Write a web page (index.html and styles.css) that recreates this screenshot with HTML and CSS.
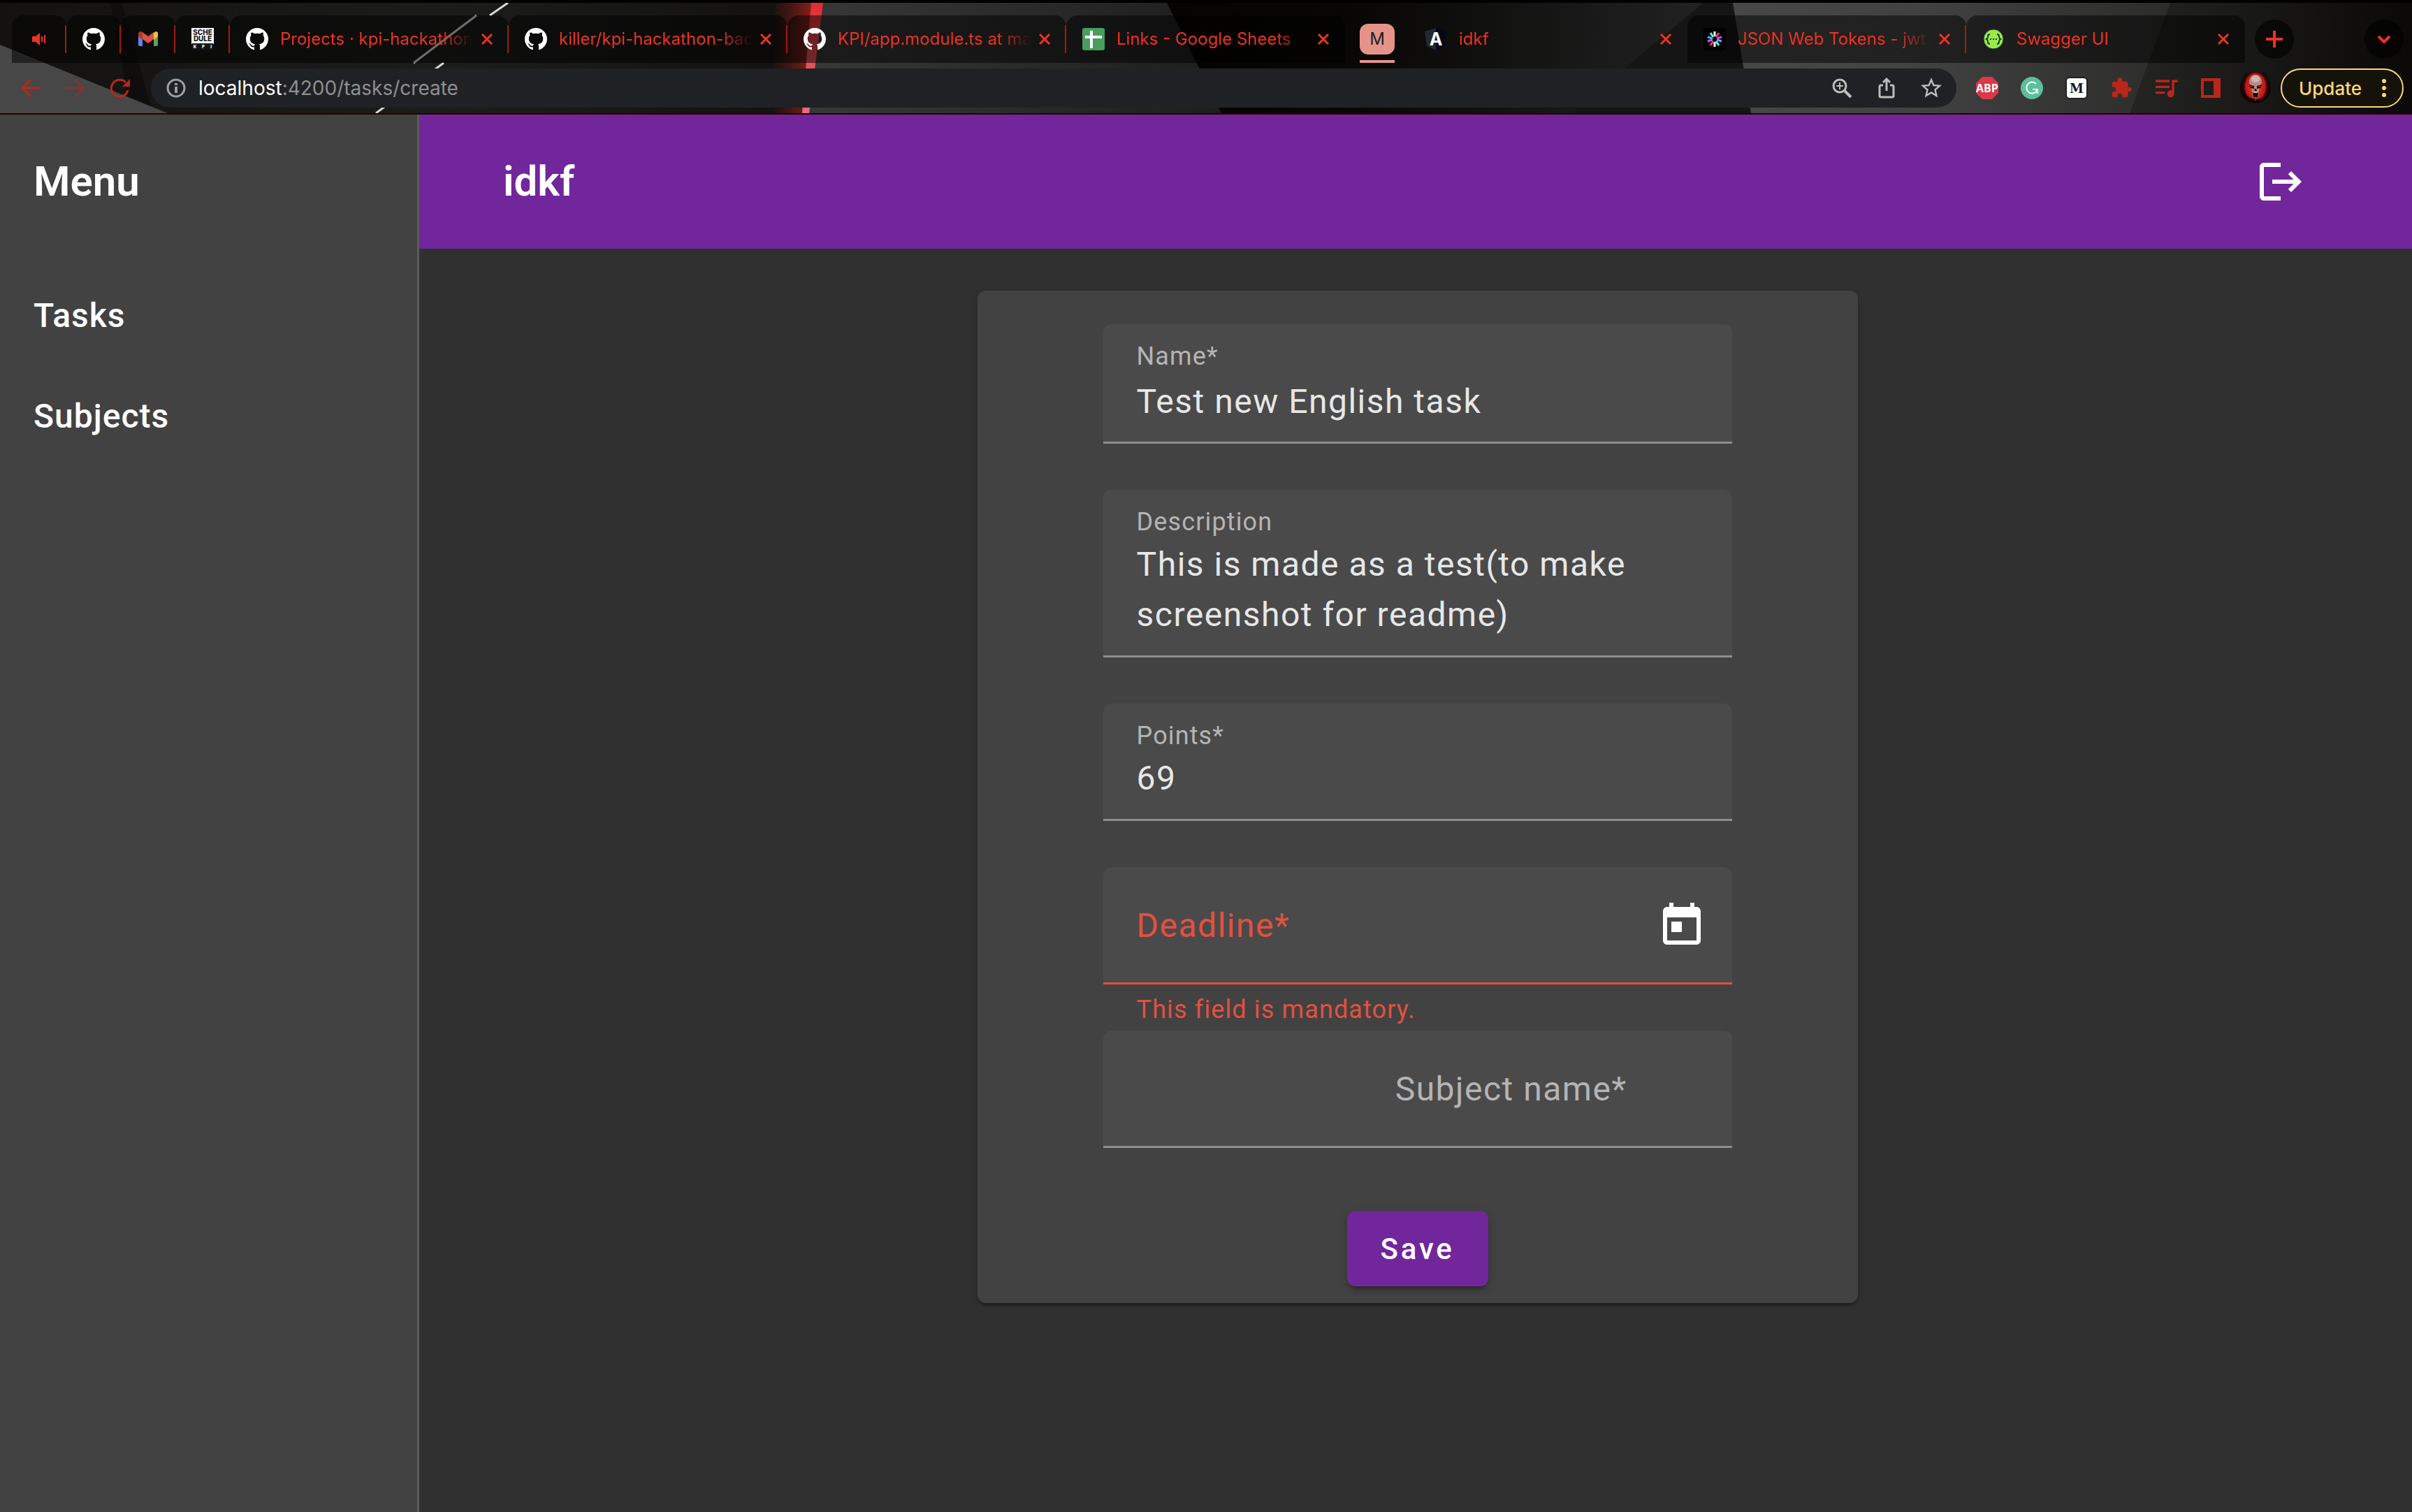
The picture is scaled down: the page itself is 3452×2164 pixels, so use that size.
FILE: index.html
```
<!DOCTYPE html>
<html lang="en">
<head>
<meta charset="utf-8">
<title>idkf</title>
<link rel="stylesheet" href="styles.css">
</head>
<body>
<svg class="defs" width="0" height="0" aria-hidden="true">
  <symbol id="close" viewBox="0 0 16 16"><path d="M1 1l14 14M15 1L1 15" fill="none" stroke="currentColor" stroke-width="3"/></symbol>
  <symbol id="github" viewBox="0 0 16 16"><path fill="#fff" d="M8 0C3.58 0 0 3.58 0 8c0 3.54 2.29 6.53 5.47 7.59.4.07.55-.17.55-.38 0-.19-.01-.82-.01-1.49-2.01.37-2.53-.49-2.69-.94-.09-.23-.48-.94-.82-1.13-.28-.15-.68-.52-.01-.53.63-.01 1.08.58 1.23.82.72 1.21 1.87.87 2.33.66.07-.52.28-.87.51-1.07-1.78-.2-3.64-.89-3.64-3.95 0-.87.31-1.59.82-2.15-.08-.2-.36-1.02.08-2.12 0 0 .67-.21 2.2.82.64-.18 1.32-.27 2-.27.68 0 1.36.09 2 .27 1.53-1.04 2.2-.82 2.2-.82.44 1.1.16 1.92.08 2.12.51.56.82 1.27.82 2.15 0 3.07-1.87 3.75-3.65 3.95.29.25.54.73.54 1.48 0 1.07-.01 1.93-.01 2.2 0 .21.15.46.55.38A8.013 8.013 0 0016 8c0-4.42-3.58-8-8-8z"/></symbol>
</svg>

<header class="browser">
  <svg class="theme" viewBox="0 0 3452 158" preserveAspectRatio="xMinYMin slice" aria-hidden="true">
    <defs>
      <linearGradient id="glow"><stop offset="0" stop-color="#7a1c14" stop-opacity="0"/><stop offset="1" stop-color="#8a2018"/></linearGradient>
      <linearGradient id="panel"><stop offset="0" stop-color="#383838"/><stop offset="1" stop-color="#1d1d1d"/></linearGradient>
      <linearGradient id="dark"><stop offset="0" stop-color="#060402"/><stop offset="0.35" stop-color="#080706"/><stop offset="1" stop-color="#222"/></linearGradient>
      <linearGradient id="steel"><stop offset="0" stop-color="#474747"/><stop offset="0.4" stop-color="#424242"/><stop offset="1" stop-color="#2c2c2b"/></linearGradient>
      <linearGradient id="edge"><stop offset="0" stop-color="#242422"/><stop offset="1" stop-color="#0a0908"/></linearGradient>
      <linearGradient id="laser" x2="0" y2="1"><stop offset="0" stop-color="#e02c32"/><stop offset="1" stop-color="#e57080"/></linearGradient>
      <linearGradient id="left"><stop offset="0" stop-color="#131210"/><stop offset="0.55" stop-color="#1c1c1b"/><stop offset="1" stop-color="#12110f"/></linearGradient>
    </defs>
    <path fill="url(#left)" d="M0 0h1170v158H0z"/>
    <path fill="#0f0e0c" d="M158 0h16l45 158h-32z"/>
    <path fill="#474747" d="M0 60l240 98H0z"/>
    <path d="M727 0l-26 18M682 18l-90 68M635 86l-97 72" stroke="#d8d8d8" stroke-width="3"/>
    <path fill="url(#glow)" d="M1110 0h54l-14 158h-46z"/>
    <path fill="url(#panel)" d="M1170 0h504l82 158h-604z"/>
    <path fill="url(#laser)" d="M1161 0h17l-20 158h-10z"/>
    <path fill="url(#dark)" d="M1670 0h780l-186 158h-516z"/>
    <path fill="#151515" d="M2438 0h44l24 158h-258z"/>
    <path fill="url(#steel)" d="M2480 0h628l-58 158h-544z"/>
    <path fill="url(#edge)" d="M3106 0h346v158h-404z"/>
  </svg>

  <nav class="tabs" aria-label="Tabs">
    <a class="tab pinned" href="#" aria-label="Playing audio">
      <svg class="favicon" viewBox="0 0 32 32"><path fill="#f0321f" d="M6 12h5l6-5v18l-6-5H6zM19 12h2v8h-2zM23 10h2v12h-2z"/></svg>
    </a>
    <a class="tab pinned" href="#" aria-label="GitHub"><svg class="favicon"><use href="#github"/></svg></a>
    <a class="tab pinned" href="#" aria-label="Gmail">
      <svg class="favicon" viewBox="0 0 32 32"><path fill="#5a86ee" d="M2 9l6 5v12H4q-2 0-2-2z"/><path fill="#55a35b" d="M24 14l6-5v15q0 2-2 2h-4z"/><path fill="#f3bf42" d="M24 7q4-4 6 0v5l-6 5z"/><path fill="#b5352a" d="M2 12V8q1-5 6-2v11z"/><path fill="#dc5144" d="M8 6l8 6 8-6v10l-8 6-8-6z"/></svg>
    </a>
    <a class="tab pinned" href="#" aria-label="Schedule KPI">
      <svg class="favicon" viewBox="0 0 32 32"><path fill="#fff" d="M0 0h32v23H0z"/><path fill="#15161b" d="M1 22h30v9H1z"/><text class="logo-text" x="16" y="10" font-size="10">SCHE</text><text class="logo-text" x="16" y="19" font-size="10">DULE</text><text class="logo-text light" x="5" y="29" font-size="6">K</text><text class="logo-text light" x="17" y="29" font-size="6">P</text><text class="logo-text light" x="28" y="29" font-size="6">I</text></svg>
    </a>
    <div class="tab"><svg class="favicon"><use href="#github"/></svg><a class="title" href="#">Projects · kpi-hackathon</a><button class="close" aria-label="Close tab"><svg><use href="#close"/></svg></button></div>
    <div class="tab"><svg class="favicon"><use href="#github"/></svg><a class="title" href="#">killer/kpi-hackathon-bac</a><button class="close" aria-label="Close tab"><svg><use href="#close"/></svg></button></div>
    <div class="tab"><svg class="favicon"><use href="#github"/></svg><a class="title" href="#">KPI/app.module.ts at ma</a><button class="close" aria-label="Close tab"><svg><use href="#close"/></svg></button></div>
    <div class="tab last">
      <svg class="favicon" viewBox="0 0 32 32"><rect width="32" height="32" rx="3" fill="#489d5f"/><path fill="#fff" d="M11 4h4v7h13v4H15v14h-4V15H4v-4h7z"/></svg>
      <a class="title" href="#">Links - Google Sheets</a><button class="close" aria-label="Close tab"><svg><use href="#close"/></svg></button>
    </div>
    <button class="group"><span class="chip">M</span></button>
    <div class="tab active">
      <svg class="favicon" viewBox="0 0 32 32"><path fill="#23272e" d="M16 0L0 5l3 21 13 6z"/><path fill="#020a1a" d="M16 0l16 5-3 21-13 6z"/><text x="16" y="25" font-size="25" font-weight="700" fill="#fff" text-anchor="middle">A</text></svg>
      <a class="title" href="#" aria-current="page">idkf</a><button class="close" aria-label="Close tab"><svg><use href="#close"/></svg></button>
    </div>
    <div class="tab">
      <svg class="favicon" viewBox="0 0 32 32"><path d="M0 0h32v32H0z"/><g stroke-width="3"><path stroke="#fff" d="M16 5v7M16 20v7"/><path stroke="#f43a6a" d="M22 7l-4 6M10 25l4-6"/><path stroke="#d04bff" d="M26 13l-7 2M6 19l7-2"/><path stroke="#45b4f5" d="M26 19l-7-2M6 13l7 2"/><path stroke="#5df5dd" d="M10 7l4 6M22 25l-4-6"/></g></svg>
      <a class="title" href="#">JSON Web Tokens - jwt.</a><button class="close" aria-label="Close tab"><svg><use href="#close"/></svg></button>
    </div>
    <div class="tab last">
      <svg class="favicon" viewBox="0 0 32 32"><circle cx="16" cy="16" r="14" fill="#9bea4b" stroke="#1e3a3f"/><path fill="none" stroke="#1e3540" stroke-width="2" d="M11 9q-3 0-3 3t-2 4q2 1 2 4t3 3M21 9q3 0 3 3t2 4q-2 1-2 4t-3 3"/><path fill="#1e3540" d="M11 15h2v2h-2zM15 15h2v2h-2zM19 15h2v2h-2z"/></svg>
      <a class="title" href="#">Swagger UI</a><button class="close" aria-label="Close tab"><svg><use href="#close"/></svg></button>
    </div>
    <button class="round" aria-label="New tab"><svg width="28" height="28" viewBox="0 0 28 28"><path d="M14 2v24M2 14h24" stroke="currentColor" stroke-width="4"/></svg></button>
    <button class="round end" aria-label="Search tabs"><svg width="28" height="28" viewBox="0 0 28 28"><path d="M6 10l8 8 8-8" fill="none" stroke="currentColor" stroke-width="4"/></svg></button>
  </nav>

  <div class="toolbar">
    <button class="tool" aria-label="Back"><svg width="32" height="32" viewBox="0 0 32 32"><path d="M29 16H5M16 4L4 16l12 12" fill="none" stroke="currentColor" stroke-width="3"/></svg></button>
    <button class="tool faded" aria-label="Forward" disabled><svg width="32" height="32" viewBox="0 0 32 32"><path d="M3 16h24M16 4l12 12-12 12" fill="none" stroke="currentColor" stroke-width="3"/></svg></button>
    <button class="tool" aria-label="Reload"><svg width="32" height="32" viewBox="0 0 32 32"><path d="M27 19A12 12 0 1 1 24 8" fill="none" stroke="currentColor" stroke-width="3"/><path d="M30 3v11H19z" fill="currentColor"/></svg></button>
    <div class="omnibox">
      <svg class="info" viewBox="0 0 28 28"><circle cx="14" cy="14" r="12" fill="none" stroke="#9aa0a6" stroke-width="3"/><path fill="#9aa0a6" d="M12 7h4v3h-4zM12 12h4v9h-4z"/></svg>
      <div class="url" role="textbox" aria-label="Address"><span class="host">localhost</span>:4200/tasks/create</div>
      <button class="tool grey" aria-label="Zoom"><svg width="32" height="32" viewBox="0 0 32 32"><circle cx="13" cy="13" r="9" fill="none" stroke="currentColor" stroke-width="3"/><path d="M20 20l9 9" stroke="currentColor" stroke-width="4"/><path d="M13 8v10M8 13h10" stroke="currentColor" stroke-width="2"/></svg></button>
      <button class="tool grey" aria-label="Share"><svg width="32" height="32" viewBox="0 0 32 32"><path d="M11 12H8q-2 0-2 2v13q0 2 2 2h16q2 0 2-2V14q0-2-2-2h-3M16 20V4M11 8l5-5 5 5" fill="none" stroke="currentColor" stroke-width="3"/></svg></button>
      <button class="tool grey" aria-label="Bookmark"><svg width="36" height="36" viewBox="0 0 24 24"><path fill="currentColor" d="M22 9.24l-7.19-.62L12 2 9.19 8.63 2 9.24l5.46 4.73L5.82 21 12 17.27 18.18 21l-1.63-7.03L22 9.24zM12 15.4l-3.76 2.27 1-4.28-3.32-2.88 4.38-.38L12 6.1l1.71 4.04 4.38.38-3.32 2.88 1 4.28L12 15.4z"/></svg></button>
    </div>
    <div class="extensions">
      <button class="tool" aria-label="Adblock Plus"><svg width="32" height="32" viewBox="0 0 32 32"><path fill="#dc3849" d="M9 0h14l9 9v14l-9 9H9l-9-9V9z"/><text x="16" y="22" font-family="Open Sans, sans-serif" font-size="16" font-weight="700" fill="#fff" text-anchor="middle">ABP</text></svg></button>
      <button class="tool" aria-label="Grammarly"><svg width="32" height="32" viewBox="0 0 32 32"><circle cx="16" cy="16" r="16" fill="#5bc09b"/><path d="M22 10a8 8 0 1 0 1 10M17 18h7v6" fill="none" stroke="#fff" stroke-width="2"/></svg></button>
      <button class="tool" aria-label="Mail tracker"><svg width="32" height="32" viewBox="0 0 32 32"><rect x="1" y="1" width="30" height="30" rx="5" fill="#fff" stroke="#1e2129" stroke-width="2"/><text x="16" y="23" font-family="DejaVu Serif, serif" font-size="18" font-weight="700" fill="#15181f" text-anchor="middle">M</text></svg></button>
      <button class="tool" aria-label="Extensions"><svg width="32" height="32" viewBox="0 0 24 24"><path fill="currentColor" d="M20.500 11H19V7c0-1.100-.9-2-2-2h-4V3.500C13 2.120 11.880 1 10.500 1S8 2.120 8 3.500V5H4c-1.100 0-1.990.9-1.990 2v3.800H3.500c1.490 0 2.700 1.210 2.700 2.700s-1.210 2.700-2.700 2.700H2V20c0 1.100.9 2 2 2h3.800v-1.500c0-1.490 1.210-2.700 2.700-2.700 1.490 0 2.700 1.210 2.700 2.700V22H17c1.100 0 2-.9 2-2v-4h1.500c1.380 0 2.500-1.120 2.500-2.500S21.880 11 20.500 11z"/></svg></button>
      <button class="tool" aria-label="Media"><svg width="40" height="40" viewBox="0 0 24 24"><path fill="currentColor" d="M15 5H3v2h12V5zm0 5H3v2h12v-2zM3 17h8v-2H3v2zM17 5v9.180c-.31-.11-.65-.18-1-.18-1.660 0-3 1.340-3 3s1.340 3 3 3 3-1.340 3-3V7h3V5h-5z"/></svg></button>
      <button class="tool" aria-label="Side panel"><svg width="28" height="28" viewBox="0 0 28 28"><path fill="currentColor" fill-rule="evenodd" d="M0 0h28v28H0zM4 4v20h14V4z"/></svg></button>
      <button class="tool" aria-label="Profile"><svg width="44" height="44" viewBox="0 0 44 44">
        <defs><radialGradient id="fire"><stop offset="0.4" stop-color="#e0281c"/><stop offset="0.72" stop-color="#b31712"/><stop offset="0.8" stop-color="#3a0806"/><stop offset="1" stop-color="#120303"/></radialGradient></defs>
        <circle cx="22" cy="22" r="22" fill="#160404"/><ellipse cx="22" cy="20" rx="20" ry="26" fill="url(#fire)" clip-path="circle(22px at 22px 22px)"/>
        <path fill="#b98a84" d="M22 3c-7 0-9 6-9 11l2 5 2 6 1 10 4 5 4-5 1-10 2-6 2-5c0-5-2-11-9-11z"/><ellipse cx="22" cy="9" rx="6" ry="5" fill="#d0b3ae"/>
        <path fill="#1b0505" d="M13 17l7 2v4l-5-1zM31 17l-7 2v4l5-1zM21 23h2l1 3h-4zM18 28h8l-1 8-3 3-3-3z"/><path fill="#f23a2a" d="M15 19h3v1h-3zM26 19h3v1h-3zM20 35h4v2h-4z"/><path fill="#ddd" d="M19 28h6v1h-6z"/>
      </svg></button>
    </div>
    <button class="update">Update<svg width="8" height="36" viewBox="0 0 8 36"><g fill="currentColor"><circle cx="4" cy="8" r="3"/><circle cx="4" cy="18" r="3"/><circle cx="4" cy="28" r="3"/></g></svg></button>
  </div>
</header>

<div class="app">
  <aside class="sidebar">
    <h2 class="bar">Menu</h2>
    <nav class="menu">
      <a href="#">Tasks</a>
      <a href="#">Subjects</a>
    </nav>
  </aside>
  <div class="content">
    <header class="bar appbar">
      <h1>idkf</h1>
      <button class="icon-button" aria-label="Log out"><svg viewBox="0 0 24 24"><path d="M17 7l-1.410 1.410L18.170 11H8v2h10.170l-2.580 2.580L17 17l5-5zM4 5h8V3H4c-1.100 0-2 .9-2 2v14c0 1.100.9 2 2 2h8v-2H4V5z"/></svg></button>
    </header>
    <main>
      <form class="card">
        <div class="field name">
          <label for="name">Name*</label>
          <input id="name" type="text" value="Test new English task">
        </div>
        <div class="hint"></div>
        <div class="field">
          <label for="description">Description</label>
          <textarea id="description" rows="2">This is made as a test(to make screenshot for readme)</textarea>
        </div>
        <div class="hint"></div>
        <div class="field">
          <label for="points">Points*</label>
          <input id="points" type="text" inputmode="numeric" value="69">
        </div>
        <div class="hint"></div>
        <div class="field empty invalid">
          <label for="deadline">Deadline*</label>
          <input id="deadline" type="text" aria-describedby="deadline-error">
          <button class="icon-button" type="button" aria-label="Open calendar"><svg viewBox="0 0 24 24"><path d="M19 3h-1V1h-2v2H8V1H6v2H5c-1.110 0-1.990.9-1.990 2L3 19c0 1.100.89 2 2 2h14c1.100 0 2-.9 2-2V5c0-1.100-.9-2-2-2zm0 16H5V8h14v11zM7 10h5v5H7z"/></svg></button>
        </div>
        <div class="hint" id="deadline-error">This field is mandatory.</div>
        <div class="field empty subject">
          <label for="subject">Subject name*</label>
          <select id="subject"><option value=""></option></select>
        </div>
        <div class="hint"></div>
        <button class="save" type="submit">Save</button>
      </form>
    </main>
  </div>
</div>
</body>
</html>
```
FILE: styles.css
```
* { box-sizing: border-box; }

body {
  margin: 0;
  min-height: 100vh;
  display: flex;
  flex-direction: column;
  background: #303030;
  color: #fff;
  font-family: Roboto, sans-serif;
}

button, input, textarea, select {
  margin: 0;
  padding: 0;
  border: 0;
  background: none;
  color: inherit;
  font: inherit;
  letter-spacing: inherit;
}

a { color: inherit; text-decoration: none; }
svg { display: block; }
.defs { position: absolute; }

/* Browser frame */
.browser {
  position: relative;
  border-top: 4px solid #000;
  border-bottom: 2px solid #2b0000;
  background: #12110f;
  font-family: Inter, sans-serif;
  overflow: hidden;
}

.theme {
  position: absolute;
  inset: 0;
  width: 100%;
  height: 100%;
}

.tabs {
  position: relative;
  display: flex;
  align-items: center;
  height: 86px;
  padding: 18px 12px 0 17px;
  color: #f0321f;
  font-size: 24px;
}

.tab {
  flex: 0 1 399px;
  min-width: 0;
  height: 68px;
  display: flex;
  align-items: center;
  padding: 0 23px;
  border-radius: 16px 16px 0 0;
  background:
    linear-gradient(#a01c12, #a01c12) right 14px / 2px 40px no-repeat,
    rgba(0, 0, 0, 0.5);
}

.tab.pinned { flex: 0 0 78px; justify-content: center; padding: 0; }
.tab.last { background: rgba(0, 0, 0, 0.5); }
.tab.active { background: none; }

.favicon { flex: none; width: 32px; height: 32px; font-family: Inter, sans-serif; }

.logo-text { font-weight: 800; fill: #15161b; text-anchor: middle; }
.logo-text.light { fill: #fff; }

.title {
  flex: 1;
  min-width: 0;
  margin: 0 12px 0 17px;
  overflow: hidden;
  white-space: nowrap;
  line-height: 32px;
  -webkit-mask-image: linear-gradient(to left, transparent, #000 48px);
  mask-image: linear-gradient(to left, transparent, #000 48px);
}

.close { display: flex; color: inherit; }
.close svg { width: 16px; height: 16px; }

.group {
  align-self: stretch;
  flex: 0 0 91px;
  padding: 0 20px 0 21px;
  display: flex;
  align-items: flex-end;
}

.chip {
  position: relative;
  z-index: 0;
  flex: 1;
  height: 56px;
  line-height: 44px;
  color: #202124;
  background: linear-gradient(#e59389, #e59389) bottom / 100% 4px no-repeat;
}

.chip::before {
  content: "";
  position: absolute;
  z-index: -1;
  inset: 0 0 12px;
  border-radius: 12px;
  background: #e59389;
}

.round {
  width: 56px;
  height: 56px;
  margin-left: 14px;
  border-radius: 50%;
  display: grid;
  place-items: center;
  background: rgba(0, 0, 0, 0.6);
}

.round.end { margin-left: auto; }

.toolbar {
  position: relative;
  display: flex;
  align-items: center;
  padding: 8px 12px;
  color: #b9271a;
}

.tool {
  flex: none;
  width: 64px;
  height: 56px;
  display: grid;
  place-items: center;
}

.tool.faded { opacity: 0.5; }
.tool.grey { color: #bdbdbd; }

.omnibox {
  flex: 1;
  min-width: 0;
  display: flex;
  align-items: center;
  height: 56px;
  margin: 0 12px;
  padding: 0 4px 0 22px;
  border-radius: 28px;
  background: #202124;
}

.info { flex: none; width: 28px; height: 28px; margin-right: 18px; }

.url {
  flex: 1;
  min-width: 0;
  overflow: hidden;
  white-space: nowrap;
  font-size: 28px;
  line-height: 40px;
  color: #8e8f91;
}

.host { color: #fff; }

.extensions { display: flex; }

.update {
  display: flex;
  align-items: center;
  justify-content: space-between;
  width: 176px;
  height: 56px;
  margin-left: 4px;
  padding: 0 22px 0 24px;
  border: 2px solid #fad777;
  border-radius: 28px;
  background: #15120a;
  color: #fad777;
  font-size: 26px;
  font-weight: 500;
}

/* Application */
.app { flex: 1; display: flex; }

.sidebar {
  flex: 0 0 600px;
  border-right: 3px solid #5a5a5a;
  background: #424242;
}

.bar {
  height: 192px;
  margin: 0;
  padding: 0 48px 2px;
  display: flex;
  align-items: center;
  font-size: 60px;
  font-weight: 600;
}

.appbar {
  justify-content: space-between;
  padding: 0 116px 0 120px;
  background: #72269b;
}

.appbar h1 { margin: 0 0 2px; font: inherit; }

.menu { padding-top: 24px; }

.menu a {
  display: block;
  padding: 0 48px;
  font-size: 48px;
  font-weight: 500;
  line-height: 144px;
  letter-spacing: 1px;
}

.content { flex: 1; min-width: 0; }

.icon-button {
  width: 144px;
  height: 144px;
  display: grid;
  place-items: center;
}

.icon-button svg { width: 72px; height: 72px; fill: #fff; }

main { padding: 60px 0; }

.card {
  width: 1260px;
  margin-left: 28%;
  padding: 48px 180px 24px;
  display: flex;
  flex-direction: column;
  border-radius: 12px;
  background: #424242;
  box-shadow: 0 6px 3px -3px rgba(0, 0, 0, 0.2), 0 3px 3px rgba(0, 0, 0, 0.14), 0 3px 9px rgba(0, 0, 0, 0.12);
}

.field {
  display: flex;
  flex-direction: column;
  padding: 23px 48px 22px;
  border-bottom: 3px solid #8e8e8e;
  border-radius: 12px 12px 0 0;
  background: #4a4a4a;
  font-size: 48px;
  line-height: 72px;
}

.field label, .field input, .field textarea, .field select, .hint {
  letter-spacing: 0.03125em;
}

.field label {
  color: #b4b4b4;
  font-size: 36px;
  line-height: 46px;
  padding-bottom: 2px;
}

.field input, .field textarea, .field select {
  display: block;
  width: 100%;
  height: 72px;
  color: #e7e7e7;
  outline: 0;
}

.field textarea {
  height: 144px;
  resize: none;
  overflow: hidden;
}

.field.name { padding-bottom: 19px; }
.field.name input { height: 78px; }

/* Label rests on the input line while the field is empty */
.field.empty {
  display: grid;
  grid-template-columns: 1fr auto;
  align-items: center;
  height: 168px;
  padding: 3px 0 0 48px;
}

.field.empty label, .field.empty input, .field.empty select {
  grid-area: 1 / 1;
  padding-bottom: 0;
  font-size: 48px;
  line-height: 72px;
}

.field.empty select { appearance: none; }
.field.subject label { padding-right: 150px; text-align: right; }

.field.invalid { border-color: #e2513f; }
.field.invalid label { color: #e2513f; }

.hint {
  height: 66px;
  padding: 12px 48px 0;
  color: #e2513f;
  font-size: 36px;
  line-height: 48px;
}

.save {
  align-self: center;
  height: 108px;
  margin-top: 24px;
  padding: 0 48px;
  border-radius: 12px;
  background: #72269b;
  box-shadow: 0 9px 3px -6px rgba(0, 0, 0, 0.2), 0 6px 6px rgba(0, 0, 0, 0.14), 0 3px 15px rgba(0, 0, 0, 0.12);
  font-size: 42px;
  font-weight: 500;
  letter-spacing: 0.09em;
}
```
